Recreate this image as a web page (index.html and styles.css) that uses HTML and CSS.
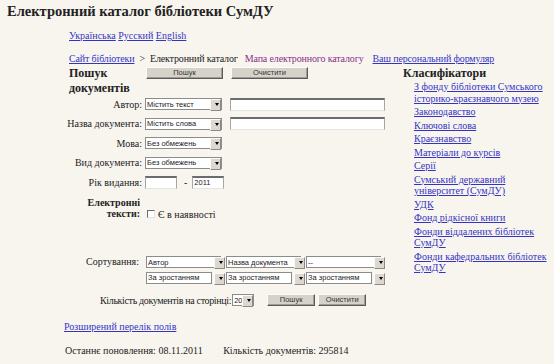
FILE: index.html
```html
<!DOCTYPE html>
<html lang="uk">
<head>
    <meta charset="UTF-8">
    <title>Електронний каталог бібліотеки СумДУ</title>
    <link rel="stylesheet" href="styles.css">
</head>
<body>
    <h1 class="title">Електронний каталог бібліотеки СумДУ</h1>

    <div class="wrap">
        <nav class="langs">
            <a href="#">Українська</a> <a href="#">Русский</a> <a href="#">English</a>
        </nav>

        <nav class="crumbs">
            <a href="#">Сайт бібліотеки</a>
            <span class="sep">&gt;</span>
            <span>Електронний каталог</span>
            <a href="#" class="visited">Мапа електронного каталогу</a>
            <a href="#">Ваш персональний формуляр</a>
        </nav>

        <div class="main">
            <section class="search">
                <div class="search-head">
                    <h2>Пошук документів</h2>
                    <div class="head-btns">
                        <button class="btn btn-wide">Пошук</button>
                        <button class="btn btn-wide">Очистити</button>
                    </div>
                </div>

                <div class="form">
                    <label class="lbl">Автор:</label>
                    <div class="ctl">
                        <span class="sel"><select><option>Містить текст</option></select></span>
                        <input class="txt" type="text">
                    </div>

                    <label class="lbl">Назва документа:</label>
                    <div class="ctl">
                        <span class="sel"><select><option>Містить слова</option></select></span>
                        <input class="txt" type="text">
                    </div>

                    <label class="lbl">Мова:</label>
                    <div class="ctl">
                        <span class="sel"><select><option>Без обмежень</option></select></span>
                    </div>

                    <label class="lbl">Вид документа:</label>
                    <div class="ctl">
                        <span class="sel"><select><option>Без обмежень</option></select></span>
                    </div>

                    <label class="lbl">Рік видання:</label>
                    <div class="ctl years">
                        <input class="txt txt-year" type="text">
                        <span class="dash">-</span>
                        <input class="txt txt-year" type="text" value="2011">
                    </div>

                    <label class="lbl lbl-bold">Електронні<br>тексти:</label>
                    <div class="ctl ctl-check">
                        <input class="check" type="checkbox"> Є в наявності
                    </div>

                    <label class="lbl lbl-sort">Сортування:</label>
                    <div class="sort">
                        <span class="sel sel-sort"><select><option>Автор</option></select></span>
                        <span class="sel sel-sort"><select><option>Назва документа</option></select></span>
                        <span class="sel sel-sort"><select><option>--</option></select></span>
                        <span class="sel sel-order"><select><option>За зростанням</option></select></span>
                        <span class="sel sel-order"><select><option>За зростанням</option></select></span>
                        <span class="sel sel-order"><select><option>За зростанням</option></select></span>
                    </div>

                    <div class="count">
                        <span class="count-lbl">Кількість документів на сторінці:</span>
                        <span class="sel sel-num"><select><option>20</option></select></span>
                        <div class="count-btns">
                            <button class="btn btn-small">Пошук</button>
                            <button class="btn btn-small">Очистити</button>
                        </div>
                    </div>
                </div>
            </section>

            <aside class="classif">
                <h2>Класифікатори</h2>
                <ul>
                    <li><a href="#">З фонду бібліотеки Сумського<br>історико-краєзнавчого музею</a></li>
                    <li><a href="#">Законодавство</a></li>
                    <li><a href="#">Ключові слова</a></li>
                    <li><a href="#">Краєзнавство</a></li>
                    <li><a href="#">Матеріали до курсів</a></li>
                    <li><a href="#">Серії</a></li>
                    <li><a href="#">Сумський державний<br>університет (СумДУ)</a></li>
                    <li><a href="#">УДК</a></li>
                    <li><a href="#">Фонд рідкісної книги</a></li>
                    <li><a href="#">Фонди віддалених бібліотек<br>СумДУ</a></li>
                    <li><a href="#">Фонди кафедральних бібліотек<br>СумДУ</a></li>
                </ul>
            </aside>
        </div>

        <a href="#" class="more">Розширений перелік полів</a>

        <p class="stats">
            <span>Останнє поновлення: 08.11.2011</span>
            <span>Кількість документів: 295814</span>
        </p>
    </div>
</body>
</html>
```

FILE: styles.css
```css
* {
    box-sizing: border-box;
}

body {
    margin: 0;
    padding: 0 7px;
    background-color: #f8f5ef;
    color: #222;
    font: 10px/11px "Liberation Serif", "Times New Roman", serif;
}

a {
    color: #3434c4;
}

a.visited {
    color: #8a2f8a;
    text-decoration: none;
}

.title {
    margin: 0;
    padding-top: 3px;
    font-size: 14.5px;
    line-height: 17px;
    font-weight: bold;
}

.wrap {
    padding-left: 57px;
}

.langs {
    margin-top: 10px;
    padding-left: 5px;
}

.crumbs {
    display: flex;
    white-space: nowrap;
    margin-top: 12px;
    padding-left: 5px;
    letter-spacing: -0.15px;
}

.crumbs .sep {
    margin: 0 5px;
}

.crumbs .visited {
    margin-left: 7px;
}

.crumbs .visited + a {
    margin-left: 9px;
}

.main {
    display: grid;
    grid-template-columns: 339px 1fr;
    margin-top: 2px;
}

h2 {
    margin: 0;
    font-size: 12px;
    line-height: 15px;
    font-weight: bold;
}

.search-head {
    display: flex;
    align-items: flex-start;
    padding-left: 5px;
}

.search-head h2 {
    width: 77px;
}

.head-btns {
    display: flex;
    gap: 8px;
    margin-top: 1px;
}

/* classic grey buttons */
.btn {
    height: 12px;
    padding: 0;
    background-color: #d6d2ca;
    border: 1px solid;
    border-color: #fbfbfb #5a5a5a #5a5a5a #fbfbfb;
    box-shadow: inset -1px -1px 0 #a09c96;
    color: #333;
    font: 7.5px/1 "Liberation Sans", Arial, sans-serif;
}

.btn-wide {
    width: 77px;
}

.btn-small {
    width: 48px;
}

.form {
    display: grid;
    grid-template-columns: 78px auto;
    column-gap: 3px;
    row-gap: 6.5px;
    align-items: center;
    margin-top: 1.5px;
}

.lbl {
    text-align: right;
    white-space: nowrap;
    line-height: 13px;
}

.lbl-bold {
    font-weight: bold;
    line-height: 10.5px;
    padding-top: 3px;
    padding-right: 2px;
}

.lbl-sort {
    align-self: start;
    margin-top: 30.5px;
    line-height: 11px;
    padding-right: 3px;
}

.ctl {
    display: flex;
    align-items: center;
    gap: 8px;
    height: 13px;
}

.ctl-check {
    align-self: end;
    gap: 3px;
    height: 10px;
    margin-left: 2px;
}

.years {
    gap: 0;
}

.dash {
    margin: 0 5px 0 7px;
}

/* dropdowns */
.sel {
    position: relative;
    display: inline-block;
    height: 12px;
}

.sel select {
    -webkit-appearance: none;
    appearance: none;
    display: block;
    width: 77px;
    height: 12px;
    margin: 0;
    padding: 0 0 0 1px;
    border: 1px solid #8c8c8c;
    border-radius: 0;
    background-color: #fff;
    color: #222;
    font: 7.5px "Liberation Sans", Arial, sans-serif;
}

.sel::after {
    content: "";
    position: absolute;
    top: 1px;
    right: 1px;
    width: 9px;
    height: 10px;
    background-color: #dcd8d0;
    border: 1px solid;
    border-color: #fbfbfb #8a8a8a #8a8a8a #fbfbfb;
}

.sel::before {
    content: "";
    position: absolute;
    z-index: 1;
    top: 5px;
    right: 3px;
    border-left: 2.5px solid transparent;
    border-right: 2.5px solid transparent;
    border-top: 3px solid #000;
}

.txt {
    width: 155px;
    height: 13px;
    margin: 0;
    padding: 0 1px;
    background-color: #fff;
    border: 1px solid;
    border-top-width: 2px;
    border-color: #6c6c6c #a6a6a6 #e4e4e4 #a6a6a6;
    font: 7.5px "Liberation Sans", Arial, sans-serif;
    color: #222;
}

.txt-year {
    width: 32px;
}

.check {
    -webkit-appearance: none;
    appearance: none;
    width: 8px;
    height: 8px;
    margin: 0;
    background-color: #fff;
    border: 1px solid;
    border-color: #6c6c6c #e4e4e4 #e4e4e4 #6c6c6c;
}

.sort {
    display: grid;
    grid-template-columns: repeat(3, 80px);
    row-gap: 3.5px;
    margin-top: 30.5px;
    margin-left: 1px;
}

.sel-sort select {
    width: 75px;
}

.sel-order select {
    width: 66px;
}

.sel-num select {
    width: 22px;
}

.count {
    grid-column: 1 / -1;
    display: flex;
    align-items: center;
    gap: 1px;
    padding-left: 36px;
    margin-top: 4px;
}

.count-lbl {
    letter-spacing: -0.35px;
}

.count-btns {
    display: flex;
    gap: 3px;
    margin-left: 12px;
}

.classif ul {
    list-style: none;
    margin: 0;
    padding: 0 0 0 11px;
    white-space: nowrap;
}

.classif li {
    line-height: 11.5px;
    margin-top: 2px;
}

.classif li:first-child {
    margin-top: 0;
}

.more {
    display: inline-block;
    margin-top: 15px;
}

.stats {
    margin: 13px 0 0 1px;
}

.stats span + span {
    margin-left: 18px;
}
```
